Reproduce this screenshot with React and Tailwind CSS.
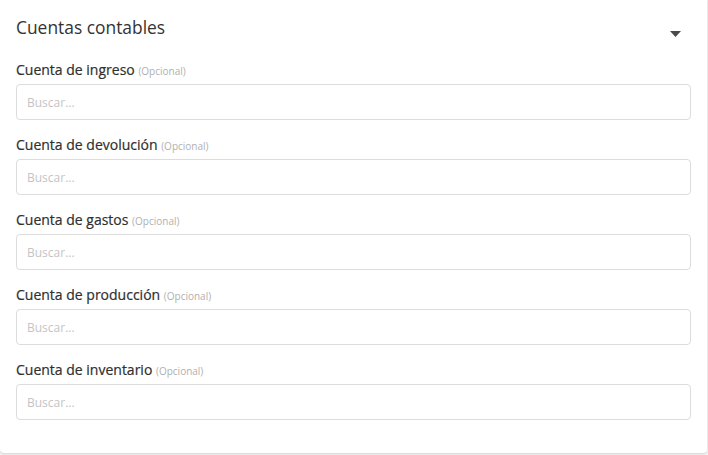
const fields = [
  'Cuenta de ingreso',
  'Cuenta de devolución',
  'Cuenta de gastos',
  'Cuenta de producción',
  'Cuenta de inventario',
]

export default function App() {
  return (
    <div className="h-[455px] bg-[#f2f2f2]" style={{ fontFamily: '"Open Sans", sans-serif' }}>
      <div className="w-[707px] bg-white rounded-b-[4px] shadow-[0_1px_2px_rgba(0,0,0,0.12)] px-4 pb-[33px]">
        <div className="flex items-start justify-between pt-[15px]">
          <h2 className="text-[17.4px] leading-6 text-[#333]">Cuentas contables</h2>
          <svg width="11" height="6" viewBox="0 0 11 6" className="mt-[16px] mr-[10px]">
            <path d="M0 0h11L5.5 6z" fill="#4a4a4a" />
          </svg>
        </div>
        <div className="flex flex-col gap-[16px] mt-[22px]">
          {fields.map(name => (
            <div key={name}>
              <label className="block text-[14px] leading-[18px] text-[#2f2f2f] mb-[5px] [-webkit-text-stroke:0.2px_#2f2f2f]">
                {name}{' '}
                <span className="text-[10px] leading-none text-[#b0b0b0] [-webkit-text-stroke:0]">(Opcional)</span>
              </label>
              <input
                placeholder="Buscar..."
                className="block w-full h-[36px] border border-[#dcdcdc] rounded-[4px] px-[10px] text-[12px] text-[#333] placeholder:text-[#c4c4c4] outline-none"
              />
            </div>
          ))}
        </div>
      </div>
    </div>
  )
}
